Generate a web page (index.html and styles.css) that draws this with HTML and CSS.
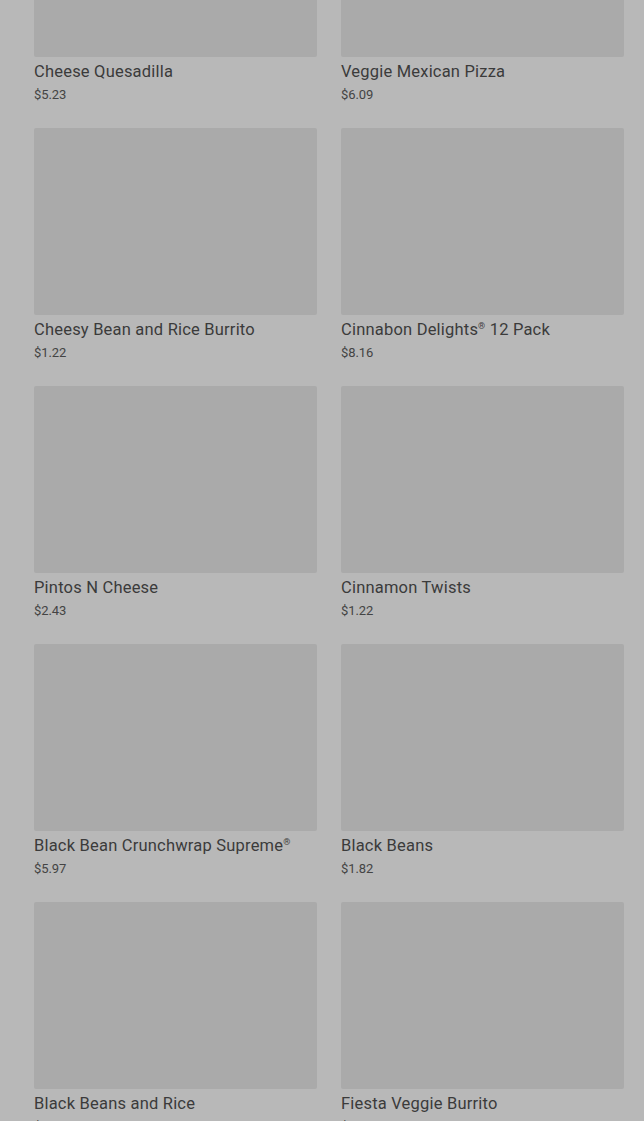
FILE: index.html
```html
<!DOCTYPE html>
<html>
<head>
<meta charset="utf-8">
<link rel="stylesheet" href="styles.css">
</head>
<body>
<main class="grid">
  <div class="card"><div class="thumb"></div><div class="name">Cheese Quesadilla</div><div class="price">$5.23</div></div>
  <div class="card"><div class="thumb"></div><div class="name">Veggie Mexican Pizza</div><div class="price">$6.09</div></div>
  <div class="card"><div class="thumb"></div><div class="name">Cheesy Bean and Rice Burrito</div><div class="price">$1.22</div></div>
  <div class="card"><div class="thumb"></div><div class="name">Cinnabon Delights<sup>®</sup> 12 Pack</div><div class="price">$8.16</div></div>
  <div class="card"><div class="thumb"></div><div class="name">Pintos N Cheese</div><div class="price">$2.43</div></div>
  <div class="card"><div class="thumb"></div><div class="name">Cinnamon Twists</div><div class="price">$1.22</div></div>
  <div class="card"><div class="thumb"></div><div class="name">Black Bean Crunchwrap Supreme<sup>®</sup></div><div class="price">$5.97</div></div>
  <div class="card"><div class="thumb"></div><div class="name">Black Beans</div><div class="price">$1.82</div></div>
  <div class="card"><div class="thumb"></div><div class="name">Black Beans and Rice</div><div class="price">$1.49</div></div>
  <div class="card"><div class="thumb"></div><div class="name">Fiesta Veggie Burrito</div><div class="price">$1.99</div></div>
</main>
</body>
</html>
```

FILE: styles.css
```css
html, body {
  margin: 0;
  padding: 0;
  background: #b8b8b8;
  overflow: hidden;
}
body {
  font-family: Roboto, "Liberation Sans", sans-serif;
  height: 1121px;
}
.grid {
  display: grid;
  grid-template-columns: 283px 283px;
  column-gap: 24px;
  row-gap: 24px;
  padding-left: 34px;
  margin-top: -130px;
}
.card {
  display: flex;
  flex-direction: column;
}
.thumb {
  height: 187px;
  background: #aaaaaa;
  border-radius: 2px;
}
.name {
  margin-top: 5px;
  font-size: 16.5px;
  line-height: 20px;
  color: #3b3b3b;
  letter-spacing: 0.2px;
  white-space: nowrap;
}
.name sup {
  font-size: 9px;
  vertical-align: 6px;
  line-height: 0;
}
.price {
  margin-top: 4px;
  font-size: 13px;
  line-height: 18px;
  color: #444444;
  letter-spacing: -0.1px;
}
```
